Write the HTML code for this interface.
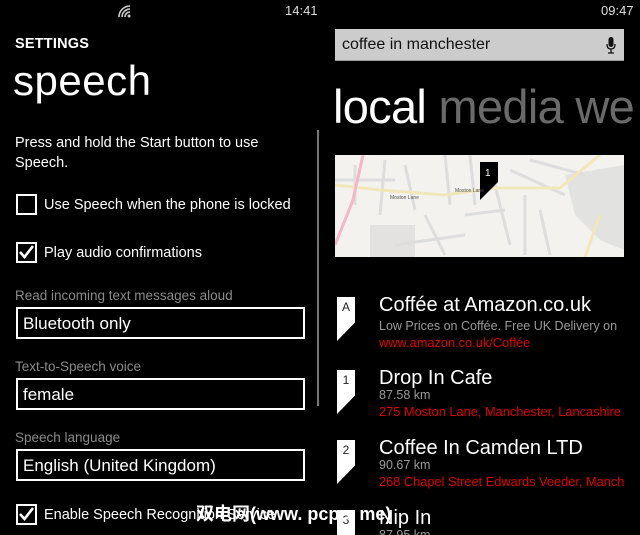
<!DOCTYPE html>
<html style="height:535px;overflow:hidden"><head><style>
*{margin:0;padding:0;box-sizing:border-box}
body{width:640px;height:535px;background:#000;overflow:hidden;position:relative;font-family:"Liberation Sans","Noto Sans CJK SC",sans-serif;color:#fff}
.a{position:absolute;white-space:nowrap}
.cb{position:absolute;width:21px;height:21px;border:2px solid #fff}
.box{position:absolute;left:16px;width:289px;height:32px;border:2px solid #fff;font-size:17px;padding:5px 0 0 5px}
.lab{font-size:13.5px;color:#8a8a8a}
.mk{position:absolute;left:337px;width:18px;height:44px;background:#fff;clip-path:polygon(0 0,100% 0,100% 58%,0 100%);color:#222;font-size:12px;text-align:center;padding-top:3px}
.t{font-size:20px;color:#fff;left:379px}
.s{font-size:12.5px;color:#9a9a9a;left:379px}
.r{font-size:12.8px;color:#e00000;left:379px}
</style></head><body>
<svg class="a" style="left:117px;top:4px" width="15" height="14" viewBox="0 0 15 14"><g fill="none" stroke="#ccc" stroke-width="1.6"><path d="M2 13 A11 11 0 0 1 13 2"/><path d="M5 13 A8 8 0 0 1 13 5"/><path d="M8 13 A5 5 0 0 1 13 8"/></g><circle cx="12" cy="12" r="1.5" fill="#ccc"/></svg>
<div class="a" style="left:285px;top:3px;font-size:13px;color:#ddd">14:41</div>
<div class="a" style="left:601px;top:3px;font-size:13px;color:#ddd">09:47</div>
<div class="a" style="left:15px;top:36px;font-size:14.5px;font-weight:bold;letter-spacing:0.2px">SETTINGS</div>
<div class="a" style="left:13px;top:57px;font-size:42px;letter-spacing:0.5px">speech</div>
<div class="a" style="left:15px;top:133px;font-size:14.5px;line-height:20px">Press and hold the Start button to use<br>Speech.</div>
<div class="cb" style="left:16px;top:194px"></div>
<div class="a" style="left:44px;top:197px;font-size:14.5px">Use Speech when the phone is locked</div>
<div class="cb" style="left:16px;top:242px"><svg width="17" height="17" viewBox="0 0 17 17"><path d="M2 8 L6.5 13 L15 2" fill="none" stroke="#fff" stroke-width="2.6"/></svg></div>
<div class="a" style="left:44px;top:245px;font-size:14.5px">Play audio confirmations</div>
<div class="a lab" style="left:15px;top:288px">Read incoming text messages aloud</div>
<div class="box" style="top:307px">Bluetooth only</div>
<div class="a lab" style="left:15px;top:359px">Text-to-Speech voice</div>
<div class="box" style="top:378px">female</div>
<div class="a lab" style="left:15px;top:430px">Speech language</div>
<div class="box" style="top:449px">English (United Kingdom)</div>
<div class="cb" style="left:16px;top:504px"><svg width="17" height="17" viewBox="0 0 17 17"><path d="M2 8 L6.5 13 L15 2" fill="none" stroke="#fff" stroke-width="2.6"/></svg></div>
<div class="a" style="left:44px;top:507px;font-size:14.5px">Enable Speech Recognition Service</div>
<div class="a" style="left:317px;top:130px;width:2px;height:276px;background:#777"></div>

<div class="a" style="left:335px;top:29px;width:289px;height:32px;background:#ccc;border-bottom:1px solid #999"></div>
<div class="a" style="left:342px;top:36px;font-size:16px;color:#111">coffee in manchester</div>
<svg class="a" style="left:606px;top:37px" width="10" height="17" viewBox="0 0 10 17"><rect x="2.5" y="0" width="5" height="10" rx="2.5" fill="#111"/><path d="M1 7 Q1 12 5 12 Q9 12 9 7 M5 12 V16 M2 16 H8" fill="none" stroke="#111" stroke-width="1.3"/></svg>
<div class="a" style="left:333px;top:79px;font-size:47px;letter-spacing:-0.7px"><span style="color:#fff">local</span> <span style="color:#6a6a6a">media we</span></div>

<svg class="a" style="left:335px;top:155px" width="289" height="102" viewBox="0 0 289 102">
<rect width="289" height="102" fill="#f3f2ef"/>
<path d="M230 20 L289 10 L289 95 L265 85 L240 60Z" fill="#e2e2e0"/>
<rect x="35" y="70" width="45" height="32" fill="#e4e2e0"/>
<g stroke="#ddd" stroke-width="3" fill="none">
<path d="M20 10 L20 50 M50 5 L45 60 M70 10 L80 55 M110 0 L115 50 M135 0 L140 50 M160 30 L175 90 M190 40 L190 100 M205 55 L215 100 M60 90 L130 80 M90 60 L110 100 M0 25 L60 25 M130 60 L170 55 M175 15 L230 40 M195 5 L250 20"/>
</g>
<path d="M0 30 L45 35 L110 40 L160 33 L225 33 L265 0" fill="none" stroke="#f1e7b8" stroke-width="3"/>
<path d="M265 60 L250 102" fill="none" stroke="#f1e7b8" stroke-width="3"/>
<path d="M28 0 L18 45 L0 90" fill="none" stroke="#f5b6c8" stroke-width="3"/>
<path d="M145 7 L163 7 L163 27 L145 45Z" fill="#000"/>
<text x="150" y="21" font-size="10" fill="#fff" font-family="Liberation Sans">1</text>
<text x="120" y="37" font-size="5" fill="#555" font-family="Liberation Sans">Moston Lane</text>
<text x="55" y="44" font-size="5" fill="#555" font-family="Liberation Sans">Moston Lane</text>
</svg>

<div class="mk" style="top:297px">A</div>
<div class="a t" style="top:294px">Coffée at Amazon.co.uk</div>
<div class="a s" style="top:319px">Low Prices on Coffée. Free UK Delivery on</div>
<div class="a r" style="top:335px">www.amazon.co.uk/Coffée</div>
<div class="mk" style="top:370px">1</div>
<div class="a t" style="top:367px">Drop In Cafe</div>
<div class="a s" style="top:388px">87.58 km</div>
<div class="a r" style="top:404px">275 Moston Lane, Manchester, Lancashire</div>
<div class="mk" style="top:440px">2</div>
<div class="a t" style="top:437px">Coffee In Camden LTD</div>
<div class="a s" style="top:458px">90.67 km</div>
<div class="a r" style="top:474px">268 Chapel Street Edwards Veeder, Manch</div>
<div class="mk" style="top:510px">3</div>
<div class="a t" style="top:507px">Nip In</div>
<div class="a s" style="top:528px">87.95 km</div>
<div class="a" style="left:196px;top:500px;font-size:18px;font-weight:bold;color:#fff">双电网(www. pcpc. me)</div>
</body></html>
